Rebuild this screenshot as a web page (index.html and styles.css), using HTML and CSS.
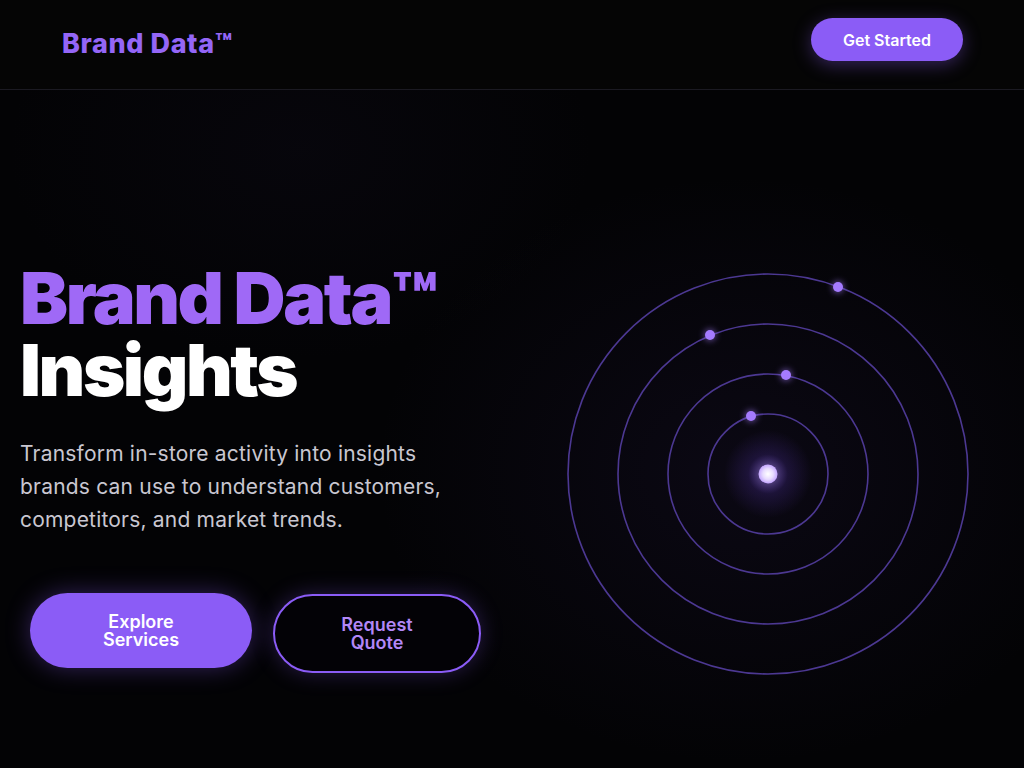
FILE: index.html
```html
<!DOCTYPE html>
<html lang="en">
<head>
<meta charset="utf-8">
<title>Brand Data Insights</title>
<link rel="stylesheet" href="styles.css">
</head>
<body>
<header class="site-header">
  <a class="logo" href="#">Brand Data™</a>
  <a class="btn-nav" href="#">Get Started</a>
</header>
<main class="hero">
  <div class="hero-copy">
    <h1 class="hero-title"><span class="accent">Brand Data™</span><span class="plain">Insights</span></h1>
    <p class="hero-text">Transform in-store activity into insights brands can use to understand customers, competitors, and market trends.</p>
    <div class="hero-actions">
      <a class="btn btn-primary" href="#">Explore Services</a>
      <a class="btn btn-outline" href="#">Request Quote</a>
    </div>
  </div>
  <div class="hero-visual">
    <div class="orbits">
      <svg class="orbit-svg" width="420" height="420" viewBox="-210 -210 420 420" aria-hidden="true">
        <defs>
          <radialGradient id="core" cx="0" cy="0" r="44" gradientUnits="userSpaceOnUse">
            <stop offset="0" stop-color="#c8adff" stop-opacity="0.65"/>
            <stop offset="0.45" stop-color="#7c4dff" stop-opacity="0.16"/>
            <stop offset="1" stop-color="#7c4dff" stop-opacity="0"/>
          </radialGradient>
          <radialGradient id="star" cx="0" cy="0" r="9.5" gradientUnits="userSpaceOnUse">
            <stop offset="0" stop-color="#ffffff"/>
            <stop offset="0.55" stop-color="#e8dcff"/>
            <stop offset="1" stop-color="#c3a5ff"/>
          </radialGradient>
          <filter id="glow" x="-2" y="-2" width="5" height="5">
            <feGaussianBlur stdDeviation="3"/>
          </filter>
        </defs>
        <g fill="none" stroke="#4c3892" stroke-width="1.6">
          <circle r="60"/>
          <circle r="100"/>
          <circle r="150"/>
          <circle r="200"/>
        </g>
        <circle r="44" fill="url(#core)"/>
        <circle r="9.5" fill="url(#star)"/>
        <g fill="#a67dff" filter="url(#glow)" opacity="0.55">
          <circle cx="70" cy="-187" r="6"/>
          <circle cx="-58" cy="-139" r="6"/>
          <circle cx="18" cy="-99" r="6"/>
          <circle cx="-17" cy="-58" r="6"/>
        </g>
        <g fill="#a57bff">
          <circle cx="70" cy="-187" r="5"/>
          <circle cx="-58" cy="-139" r="5"/>
          <circle cx="18" cy="-99" r="5"/>
          <circle cx="-17" cy="-58" r="5"/>
        </g>
      </svg>
    </div>
  </div>
</main>
</body>
</html>
```

FILE: styles.css
```css
* { box-sizing: border-box; }
html, body { margin: 0; padding: 0; }
body {
  background: #030305;
  font-family: Inter, "Noto Sans", "Liberation Sans", sans-serif;
  color: #fff;
  overflow: hidden;
}
a { text-decoration: none; }

.site-header {
  height: 90px;
  display: flex;
  align-items: flex-start;
  justify-content: space-between;
  padding: 18px 61px 0 62px;
  background: #050505;
  border-bottom: 1px solid #1b1a22;
}
.logo {
  font-size: 27px;
  line-height: 32px;
  font-weight: 800;
  letter-spacing: 0.6px;
  color: #9466f7;
  margin-top: 10px;
}
.btn-nav {
  display: inline-flex;
  align-items: center;
  justify-content: center;
  width: 152px;
  height: 43px;
  border-radius: 22px;
  background: #8b5cf6;
  color: #fff;
  font-size: 16px;
  font-weight: 600;
  box-shadow: 0 4px 18px rgba(139, 92, 246, 0.35);
}

.hero {
  height: calc(100vh - 90px);
  padding-top: 90px;
  display: grid;
  grid-template-columns: 512px 512px;
  align-items: center;
  background:
    radial-gradient(ellipse 520px 420px at 740px 380px, rgba(60, 40, 110, 0.14), rgba(0,0,0,0) 70%),
    radial-gradient(ellipse 420px 300px at 300px 60px, rgba(40, 30, 70, 0.10), rgba(0,0,0,0) 70%),
    #030305;
}
.hero-copy {
  padding-left: 20px;
  padding-bottom: 13px;
}
.hero-title {
  margin: 0;
  font-size: 72px;
  line-height: 72px;
  font-weight: 900;
  letter-spacing: -2.4px;
}
.hero-title span { display: block; }
.accent { color: #9f69f6; }
.plain { color: #ffffff; }

.hero-text {
  margin: 31px 0 0;
  max-width: 456px;
  font-size: 21px;
  line-height: 33px;
  color: #c9c7d1;
  font-weight: 400;
  letter-spacing: 0.2px;
}

.hero-actions {
  display: flex;
  align-items: flex-start;
  gap: 21px;
  margin-top: 57px;
  padding-left: 10px;
}
.btn {
  display: flex;
  align-items: center;
  justify-content: center;
  text-align: center;
  font-size: 18px;
  line-height: 18px;
  font-weight: 600;
  border-radius: 40px;
}
.btn-primary {
  width: 222px;
  height: 75px;
  padding: 0 68px;
  background: #8b5cf6;
  color: #fff;
  box-shadow: 0 0 24px rgba(139, 92, 246, 0.35);
}
.btn-outline {
  width: 208px;
  height: 79px;
  padding: 0 60px;
  margin-top: 1px;
  border: 2px solid #8b5cf6;
  background: #030206;
  color: #b287f7;
  box-shadow: 0 0 22px rgba(139, 92, 246, 0.28);
}

.hero-visual {
  display: flex;
  justify-content: center;
  align-items: center;
}
.orbits {
  width: 420px;
  height: 420px;
}
.orbit-svg { display: block; }
```
